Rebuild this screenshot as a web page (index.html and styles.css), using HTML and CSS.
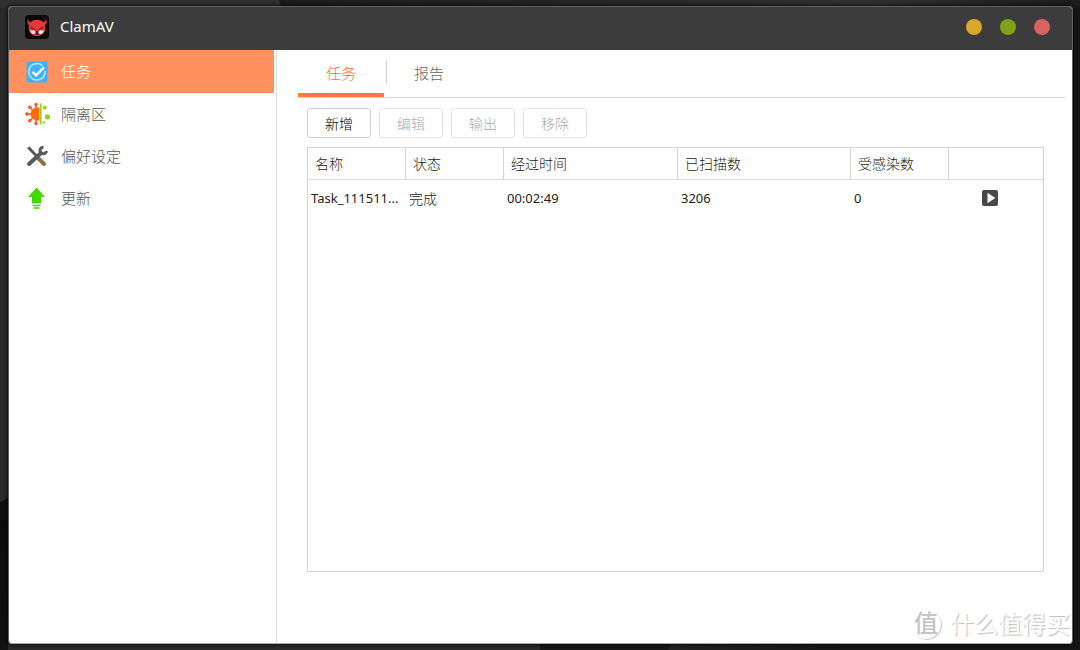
FILE: index.html
```html
<!DOCTYPE html>
<html lang="zh-CN">
<head>
<meta charset="utf-8">
<title>ClamAV</title>
<link rel="stylesheet" href="styles.css">
</head>
<body>
<div class="window">
  <header class="titlebar">
    <svg class="app-icon" viewBox="0 0 24 24" aria-hidden="true">
      <rect width="24" height="24" rx="4" fill="#0b0808"/>
      <path d="M3.200 3C2.800 5.500 3.800 7 5.800 7.300C7.500 5.500 9.500 4.800 12 4.800s4.500.7 6.200 2.500C20.200 7 21.200 5.500 20.800 3c1.500 3 1 5.800-.9 7.400.4 1.500.6 3.200.1 4.800-1 3.600-4.100 5.800-8 5.800s-7-2.200-8-5.800c-.5-1.600-.3-3.300.1-4.800C2.200 8.800 1.700 6 3.200 3z" fill="#df3a3e"/>
      <path d="M5.500 11l5 3-1 1.500-4-2zM18.500 11l-5 3 1 1.500 4-2z" fill="#a01e22"/>
      <path d="M5 14.500q7 3 14 0l-1 3.500q-6 3.500-12 0z" fill="#54191b"/>
      <path d="M5.300 14.500l2 1.300 1-1 2.300 1.800-.2 2.200-2.900.2-2-2zM18.700 14.500l-2 1.300-1-1-2.300 1.800.2 2.200 2.900.2 2-2z" fill="#eee3e0"/>
    </svg>
    <h1 class="title">ClamAV</h1>
    <div class="controls">
      <button class="dot dot-yellow" aria-label="最小化"></button>
      <button class="dot dot-green" aria-label="最大化"></button>
      <button class="dot dot-red" aria-label="关闭"></button>
    </div>
  </header>
  <div class="body">
    <nav class="sidebar">
      <a class="nav-item active" href="#tasks">
        <svg class="nav-icon" viewBox="0 0 24 24" aria-hidden="true">
          <rect x="1.500" y="1.500" width="21" height="21" rx="2" fill="#3eb2fa"/>
          <path d="M17.500 5.800A8.200 8.200 0 1 0 20.100 11" fill="none" stroke="#b9e4ff" stroke-width="1.500"/>
          <path d="M7.500 11.800l3.500 3.500 8-8" fill="none" stroke="#fff" stroke-width="2.400"/>
        </svg>
        <span class="nav-label">任务</span>
      </a>
      <a class="nav-item" href="#quarantine">
        <svg class="nav-icon" viewBox="0 0 24 24" aria-hidden="true">
          <g stroke="#ff5533" fill="#ff5533">
            <path d="M11 12H2M11 12L5 5.500M11 12L5 18.500M11 12V3M11 12v9" stroke-width="1.600"/>
            <circle cx="2" cy="12" r="1.300"/><circle cx="4.800" cy="5.300" r="1.400"/><circle cx="4.800" cy="18.700" r="1.400"/>
            <circle cx="11" cy="2.500" r="1.300"/><circle cx="11" cy="21.500" r="1.300"/>
          </g>
          <path d="M14.500 5.500H12a6.500 6.500 0 0 0 0 13h2.500z" fill="#ff6a0c"/>
          <path d="M15.700 1.500v21" stroke="#96db12" stroke-width="2"/>
          <circle cx="19.800" cy="5.700" r="2.100" fill="#9cdb1c"/>
          <circle cx="22.500" cy="14.800" r="2.600" fill="#8fd516"/>
          <circle cx="18.800" cy="20.500" r="1.300" fill="#9cdb1c"/>
        </svg>
        <span class="nav-label">隔离区</span>
      </a>
      <a class="nav-item" href="#preferences">
        <svg class="nav-icon" viewBox="0 0 24 24" aria-hidden="true">
          <path d="M2 4l2.500-1.500 8.500 9-2 2z" fill="#555"/>
          <path d="M13 14l6 6" stroke="#8f7040" stroke-width="4" stroke-linecap="round"/>
          <path d="M4 20L16 9" stroke="#555a5d" stroke-width="4" stroke-linecap="round"/>
          <path d="M18.500 3.200A3.300 3.300 0 1 0 21.500 7" fill="none" stroke="#555a5d" stroke-width="3"/>
        </svg>
        <span class="nav-label">偏好设定</span>
      </a>
      <a class="nav-item" href="#update">
        <svg class="nav-icon" viewBox="0 0 24 24" aria-hidden="true">
          <path d="M11.500 1.500L20 11h-4v6.500H7V11H3z" fill="#42d900"/>
          <path d="M7.500 19.500h8M8.500 22h6" stroke="#42d900" stroke-width="1.600"/>
        </svg>
        <span class="nav-label">更新</span>
      </a>
    </nav>
    <main class="content">
      <div class="tabs">
        <button class="tab selected">任务</button>
        <span class="tab-divider"></span>
        <button class="tab">报告</button>
      </div>
      <div class="panel">
        <div class="toolbar">
          <button class="btn">新增</button>
          <button class="btn" disabled>编辑</button>
          <button class="btn" disabled>输出</button>
          <button class="btn" disabled>移除</button>
        </div>
        <div class="grid">
          <table class="task-table">
            <colgroup>
              <col class="col-small"><col class="col-small"><col class="col-wide"><col class="col-medium"><col class="col-small"><col>
            </colgroup>
            <thead>
              <tr><th>名称</th><th>状态</th><th>经过时间</th><th>已扫描数</th><th>受感染数</th><th></th></tr>
            </thead>
            <tbody>
              <tr>
                <td class="num">Task_111511...</td><td>完成</td><td class="num">00:02:49</td><td class="num">3206</td><td class="num">0</td>
                <td class="action">
                  <button class="run" aria-label="运行">
                    <svg class="run-icon" viewBox="0 0 16 16" aria-hidden="true">
                      <rect width="16" height="16" rx="2" fill="#484848"/>
                      <path d="M5.500 2.800L13.300 8l-7.800 5.200z" fill="#fff"/>
                    </svg>
                  </button>
                </td>
              </tr>
            </tbody>
          </table>
        </div>
      </div>
    </main>
  </div>
</div>
<div class="watermark">
  <span class="watermark-logo">值</span>
  <span>什么值得买</span>
</div>
</body>
</html>
```
FILE: styles.css
```css
* {
  box-sizing: border-box;
}

body {
  margin: 0;
  min-height: 100vh;
  padding: 6px 7px 6px 8px;
  display: flex;
  background:
    linear-gradient(125deg, transparent 62%, #222 62%, #151515 78%) bottom / 100% 8px no-repeat,
    linear-gradient(75deg, #303030 26%, #1b1b1b 26%, #303030 80%, #1c1c1c) top / 100% 8px no-repeat,
    linear-gradient(145deg, transparent 50%, #101010 50%) left 480px / 8px 40px no-repeat,
    linear-gradient(#0c0c0c, #111) left 520px / 8px 130px no-repeat,
    linear-gradient(to right, #2a2a2a 50%, #161616 50%);
  color: #222;
  font-family: "Noto Sans", "Noto Sans CJK SC", sans-serif;
  font-size: 14px;
}

button {
  font: inherit;
  cursor: pointer;
}

.window {
  flex: 1;
  display: flex;
  flex-direction: column;
  border: 1px solid #606060;
  border-bottom-color: #aaa;
  border-radius: 4px;
  overflow: hidden;
  background: #fff;
  box-shadow: 0 0 4px #000;
}

.titlebar {
  display: flex;
  align-items: center;
  height: 43px;
  padding: 0 22px 3px 16px;
  background: #3c3c3c;
  color: #fff;
}

.app-icon {
  width: 24px;
  height: 24px;
}

.title {
  flex: 1;
  margin: 0 0 0 11px;
  padding-bottom: 2px;
  font-size: 15px;
  font-weight: 400;
}

.controls {
  display: flex;
  gap: 18px;
}

.dot {
  width: 16px;
  height: 16px;
  padding: 0;
  border: 0;
  border-radius: 50%;
}

.dot-yellow {
  background: #d9a62e;
}

.dot-green {
  background: #82a118;
}

.dot-red {
  background: #d96262;
}

.body {
  flex: 1;
  display: flex;
}

.sidebar {
  width: 268px;
  padding-right: 2px;
  border-right: 1px solid #dcdcdc;
}

.nav-item {
  display: flex;
  align-items: center;
  gap: 12px;
  height: 42px;
  padding-left: 16px;
  color: #555;
  font-size: 15px;
  font-weight: 300;
  text-decoration: none;
}

.nav-item.active {
  height: 43px;
  background: #ff9160;
  color: #fff;
}

.nav-icon {
  width: 24px;
  height: 24px;
  overflow: visible;
}

.nav-label {
  padding-bottom: 2px;
}

.content {
  flex: 1;
  display: flex;
  flex-direction: column;
  padding: 0 7px 71px 20px;
}

.tabs {
  display: flex;
  height: 48px;
  border-bottom: 1px solid #d8d8d8;
}

.tab {
  width: 86px;
  margin-left: 1px;
  padding: 2px 0 0;
  border: 0;
  border-bottom: 4px solid transparent;
  background: none;
  color: #666;
  font-size: 15px;
  font-weight: 300;
}

.tab.selected {
  border-bottom-color: #ff7840;
  color: #ff6a30;
}

.tab-divider {
  width: 1px;
  height: 24px;
  margin: 10px -2px 0 2px;
  background: #d0d0d0;
}

.panel {
  flex: 1;
  display: flex;
  flex-direction: column;
  gap: 9px;
  padding: 10px 21px 0 10px;
}

.toolbar {
  display: flex;
  gap: 8px;
}

.btn {
  width: 64px;
  height: 30px;
  padding: 0;
  border: 1px solid #cfcfcf;
  border-radius: 3px;
  background: #fff;
  color: #000;
  font-weight: 300;
}

.btn:disabled {
  border-color: #e4e4e4;
  color: #aaa;
  cursor: default;
}

.grid {
  flex: 1;
  border: 1px solid #d4d4d4;
}

.task-table {
  width: 100%;
  border-collapse: separate;
  border-spacing: 0;
  table-layout: fixed;
}

.col-small {
  width: 98px;
}

.col-wide {
  width: 174px;
}

.col-medium {
  width: 173px;
}

.task-table th {
  height: 32px;
  padding: 0 7px 2px;
  border-right: 1px solid #d4d4d4;
  border-bottom: 1px solid #e0e0e0;
  font-weight: 300;
  text-align: left;
}

.task-table th:last-child {
  border-right: 0;
}

.task-table td {
  height: 36px;
  padding: 0 3px;
  font-weight: 300;
  white-space: nowrap;
}

.task-table .num {
  font-size: 13px;
  font-weight: 400;
}

.task-table .action {
  padding: 0 12px 4px 0;
  text-align: center;
}

.run {
  padding: 0;
  border: 0;
  background: none;
  vertical-align: middle;
}

.run-icon {
  display: block;
  width: 16px;
  height: 16px;
}

.watermark {
  position: absolute;
  right: 10px;
  bottom: 8px;
  display: flex;
  align-items: center;
  gap: 9px;
  color: #fff;
  font-size: 24px;
  line-height: 36px;
  text-shadow: 1px 1px 1px #bbb;
}

.watermark-logo {
  width: 30px;
  height: 30px;
  border-radius: 50%;
  box-shadow: 1px 1px 1px #ccc;
  color: #c4c4c4;
  font-weight: 500;
  line-height: 28px;
  text-align: center;
  text-shadow: none;
}
```
